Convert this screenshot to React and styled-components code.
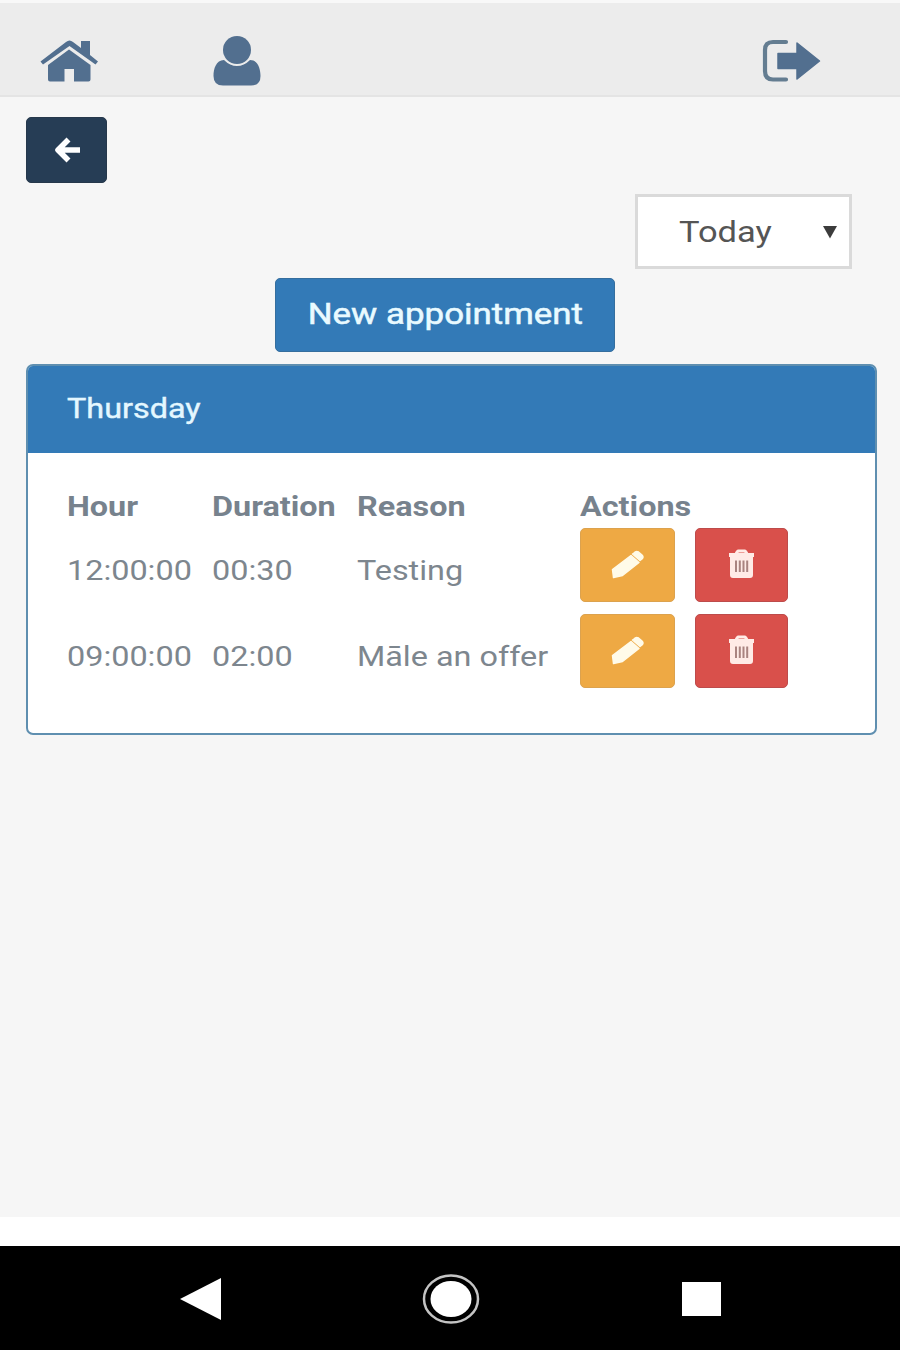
import React from "react";
import styled, { createGlobalStyle } from "styled-components";

const Global = createGlobalStyle`
  * { box-sizing: border-box; }
  body { margin: 0; background: #f6f6f6; font-family: Roboto, "Liberation Sans", sans-serif; }
  button { font-family: inherit; border: 0; padding: 0; }
  svg { display: block; }
`;

const Screen = styled.div`
  width: 900px;
  height: 1350px;
  display: flex;
  flex-direction: column;
  overflow: hidden;
`;

const TopBar = styled.header`
  height: 97px;
  border-top: 3px solid #f8f8f8;
  border-bottom: 2px solid #e4e4e4;
  background: #ececec;
  display: flex;
  align-items: flex-start;
  padding: 31px 78px 0 38px;
  color: #526f8f;
`;

const NavIcon = styled.a`
  margin-left: ${(p) => p.$left || "0"};
`;

const Content = styled.main`
  flex: 1;
  display: flex;
  flex-direction: column;
  padding: 20px 23px 0 26px;
`;

const Button = styled.button`
  display: flex;
  align-items: center;
  justify-content: center;
  width: ${(p) => p.$w}px;
  height: ${(p) => p.$h}px;
  padding-bottom: ${(p) => p.$lift || 0}px;
  border-radius: 5px;
  border: 1px solid ${(p) => p.$edge};
  background: ${(p) => p.$bg};
  color: #fff;
`;

const Label = styled.span`
  display: inline-block;
  transform: scaleX(${(p) => p.$stretch || 1.156});
  transform-origin: ${(p) => p.$origin || "left"} center;
  font-size: ${(p) => p.$size || 28}px;
  font-weight: ${(p) => p.$weight || 400};
  line-height: 34px;
  white-space: nowrap;
  color: ${(p) => p.$color || "#7d868e"};
  -webkit-text-stroke: ${(p) => p.$stroke || 0}px currentColor;
`;

const Select = styled.div`
  align-self: flex-end;
  margin: 11px 25px 0 0;
  width: 217px;
  height: 75px;
  border: 3px solid #dadada;
  background: #fff;
  display: flex;
  align-items: center;
  justify-content: space-between;
  padding: 0 12px 0 41px;
`;

const NewRow = styled.div`
  display: flex;
  margin: 9px 0 12px 249px;
`;

const Panel = styled.section`
  height: 371px;
  border: 2px solid #5f8fb0;
  border-radius: 7px;
  background: #fff;
  overflow: hidden;
`;

const PanelHeader = styled.div`
  height: 87px;
  background: #337ab7;
  padding: 26px 39px 0;
`;

const Table = styled.div`
  padding: 27px 0 0 39px;
`;

const Row = styled.div`
  display: grid;
  grid-template-columns: 145px 145px 223px 1fr;
  height: ${(p) => p.$h}px;
  margin-bottom: ${(p) => p.$gap || 0}px;
  padding-top: ${(p) => p.$pad || 0}px;
`;

const Cell = styled.div`
  padding-top: 26px;
`;

const Actions = styled.div`
  display: flex;
  gap: 20px;
`;

const Footer = styled.footer`
  height: 133px;
  border-top: 29px solid #fff;
  background: #000;
  display: flex;
  align-items: center;
  padding: 2px 0 0 180px;
`;

const Key = styled.div`
  margin-right: ${(p) => p.$gap || 0}px;
`;

const HomeIcon = () => (
  <svg width="62" height="52" viewBox="38 34 62 52" fill="currentColor">
    <path d="M69 49.5 L90.5 65 V79.5 Q90.5 81.5 88.500 81.500 H74 V69 H64.500 V81.500 H50 Q48 81.500 48 79.500 V65 Z" />
    <path d="M40.500 61.500 L66 42 Q69.500 39 73 42 L81 48 V41 H90 V55 L98 61.500 L95.500 64.500 L69.500 46 L43 64.500 Z" />
  </svg>
);

const UserIcon = () => (
  <svg width="50" height="56" viewBox="212 34 50 56" fill="currentColor">
    <ellipse cx="237" cy="50" rx="14" ry="14" />
    <path d="M224 60 Q230 66 237 66 Q244 66 250 60 C258 60 260.500 69 260.500 76 Q260.500 85.500 251 85.500 H223 Q213.500 85.500 213.500 76 C213.500 69 216 60 224 60 Z" />
  </svg>
);

const LogoutIcon = () => (
  <svg width="62" height="52" viewBox="760 34 62 52">
    <path d="M786 42 H773 Q765 42 765 50 V71 Q765 79.500 773 79.500 H786" fill="none" stroke="#647d91" strokeWidth="4.200" strokeLinecap="round" />
    <path d="M778 53.500 H797 V43 L819.500 61 L797 79 V68.500 H778 Z" fill="currentColor" stroke="currentColor" strokeWidth="1.500" strokeLinejoin="round" />
  </svg>
);

const BackIcon = () => (
  <svg width="28" height="26" viewBox="0 0 28 26" fill="none" stroke="currentColor" strokeWidth="5.600" strokeLinejoin="round">
    <path d="M15.500 2.500 L5 13 L15.500 23.500 M5 13 H27" />
  </svg>
);

const PencilIcon = () => (
  <svg width="34" height="30" viewBox="0 0 34 30" fill="#fffbe9" stroke="#fffbe9" strokeWidth="1.500" strokeLinejoin="round">
    <path d="M23 4 Q25 1.500 27.500 3 L31 6 Q33 8 31 10 L29 11.500 L21.500 5 Z" />
    <path d="M20 6.500 L28 13.500 L11.500 26.500 L2.500 28.500 L1.500 20.500 Z" />
  </svg>
);

const TrashIcon = () => (
  <svg width="28" height="30" viewBox="0 0 28 30">
    <path d="M8 4.500 L10 2 H17 L19 4.500" fill="none" stroke="#ffebe6" strokeWidth="3" strokeLinejoin="round" />
    <path d="M1 4 H26 V8 H25 V26 Q25 29 22 29 H5 Q2 29 2 26 V8 H1 Z" fill="#ffebe6" />
    <path d="M8 11.500 V23 M11.800 11.500 V23 M15.500 11.500 V23 M19.200 11.500 V23" stroke="#a98480" strokeWidth="2" />
  </svg>
);

const appointments = [
  { hour: "12:00:00", duration: "00:30", reason: "Testing" },
  { hour: "09:00:00", duration: "02:00", reason: "Māle an offer" },
];

export default function App() {
  return (
    <Screen>
      <Global />
      <TopBar>
        <NavIcon><HomeIcon /></NavIcon>
        <NavIcon $left="112px"><UserIcon /></NavIcon>
        <NavIcon $left="auto"><LogoutIcon /></NavIcon>
      </TopBar>
      <Content>
        <Button $w={81} $h={66} $bg="#263d55" $edge="#26384b"><BackIcon /></Button>
        <Select>
          <Label $size={29.5} $stretch={1.168} $color="#555">Today</Label>
          <svg width="14" height="14" viewBox="0 0 14 14"><path d="M0 1 H14 L7 13.500 Z" fill="#3c3c3c" /></svg>
        </Select>
        <NewRow>
          <Button $w={340} $h={74} $lift={2} $bg="#337ab7" $edge="#356e9e">
            <Label $size={30} $stretch={1.163} $stroke={0.5} $origin="center" $color="#e9faff">New appointment</Label>
          </Button>
        </NewRow>
        <Panel>
          <PanelHeader><Label $stroke={0.4} $color="#e4f7ff">Thursday</Label></PanelHeader>
          <Table>
            <Row $h={48} $pad={10}>
              {["Hour", "Duration", "Reason", "Actions"].map((t) => (
                <Label key={t} $weight={700} $color="#77828d">{t}</Label>
              ))}
            </Row>
            {appointments.map((a) => (
              <Row key={a.hour} $h={74} $gap={12}>
                <Cell><Label>{a.hour}</Label></Cell>
                <Cell><Label>{a.duration}</Label></Cell>
                <Cell><Label>{a.reason}</Label></Cell>
                <Actions>
                  <Button $w={95} $h={74} $lift={2} $bg="#eea944" $edge="#dca24e"><PencilIcon /></Button>
                  <Button $w={93} $h={74} $lift={2} $bg="#d9504b" $edge="#bd4b4b"><TrashIcon /></Button>
                </Actions>
              </Row>
            ))}
          </Table>
        </Panel>
      </Content>
      <Footer>
        <Key $gap={200}><svg width="42" height="44" viewBox="0 0 42 44"><path d="M0 22 L41 1 V43 Z" fill="#fff" /></svg></Key>
        <Key $gap={202}>
          <svg width="58" height="50" viewBox="0 0 58 50">
            <ellipse cx="29" cy="25" rx="27" ry="23.500" fill="none" stroke="#c4c4c4" strokeWidth="2.500" />
            <ellipse cx="29" cy="25" rx="20.500" ry="18" fill="#fff" />
          </svg>
        </Key>
        <Key><svg width="39" height="34" viewBox="0 0 39 34"><rect width="39" height="34" fill="#fff" /></svg></Key>
      </Footer>
    </Screen>
  );
}
